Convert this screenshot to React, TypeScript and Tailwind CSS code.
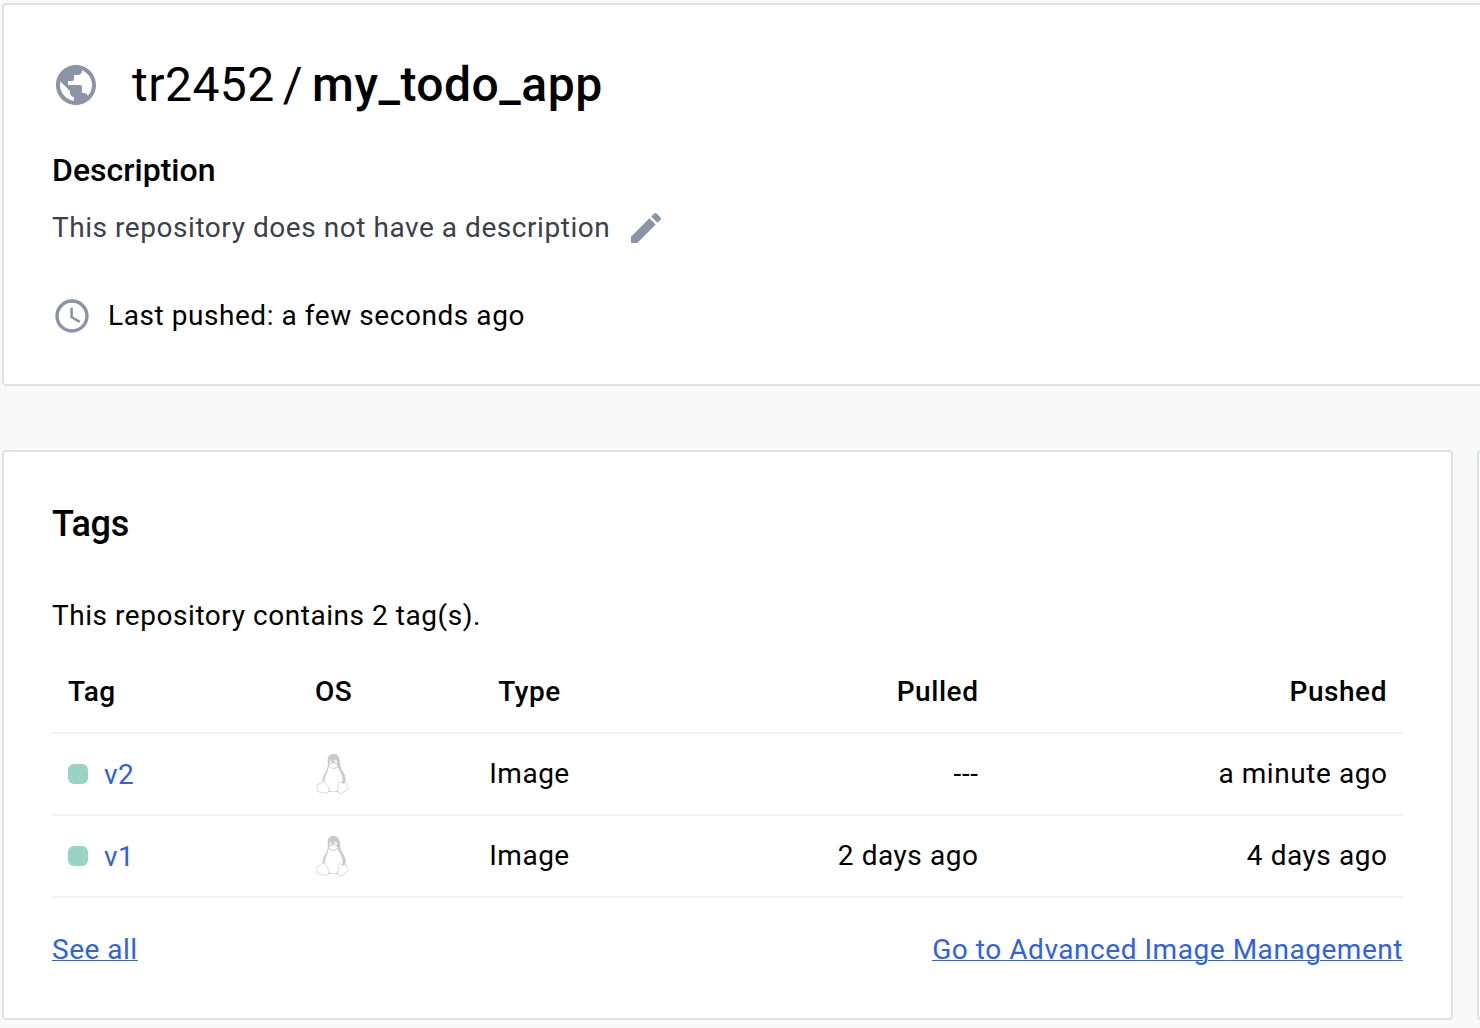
import type { ReactNode } from "react";
import { MdAccessTime, MdEdit, MdPublic } from "react-icons/md";

function Tux() {
  return (
    <svg width="34" height="42" viewBox="0 0 34 42" fill="none">
      <path
        d="M17.800 1c-4.300 0-6.100 2.400-6.100 6 0 4 .5 6.500-.9 9.500-1.500 3-3.500 5.500-4 9-.3 1.500-.4 3-.2 4.500L12 39h12l5-9c.9-2.500.9-5-.1-7.500-1.200-3.200-3.300-5.200-4.300-8.500-.7-2.400-.2-4.800-.8-7.200C22.800 3 21.200 1 17.800 1z"
        fill="#cbcbcb"
      />
      <path
        d="M12.800 13.800c1.200 1.300 3.300 2.200 4.700 2.100 1.500 0 3.300-1.100 4.200-2.100 1 3 3.400 6 4.400 9.500.7 2.500.6 4.300 0 5.700-2.800.5-3.700 3-3.700 5.500 0 1.300-.4 2.500-1.300 3.200-2 .9-5 1-7.200.1-1-2.300-3.500-4.800-5.300-7.700-.3-3 .4-6.200 1.800-9 1.200-2.300 1.800-4.800 2.400-7.300z"
        fill="#fff"
      />
      <ellipse cx="14.600" cy="8.800" rx="1.200" ry="1.500" fill="#fff" />
      <ellipse cx="19.400" cy="8.800" rx="1.700" ry="1.800" fill="#fff" />
      <circle cx="15" cy="8.800" r=".7" fill="#c4c4c4" />
      <circle cx="18.900" cy="8.800" r=".8" fill="#c4c4c4" />
      <path
        d="M13 12c1.200-1.600 2.900-2.200 4.400-1.700 1.600.4 4 .8 4 2 0 1.300-2.500 2.900-4.100 2.900-1.700 0-4.300-1.700-4.300-3.200z"
        fill="#fff"
        stroke="#dedede"
        strokeWidth=".5"
      />
      <path
        d="M6.500 28.500c1.700-.3 2.900.9 4 2.700 1.200 2 3 4 2.500 6.200-.5 2.300-2.600 3.300-4.800 2.700-2.300-.8-5-1.100-6.600-1.700-1.200-.5-.4-2-.3-3.300.1-1.300-.8-2.900-.1-3.700.8-.8 2.400-.3 3.400-1 .8-.6 1-1.700 1.900-1.900z"
        fill="#fff"
        stroke="#cfcfcf"
        strokeWidth=".8"
      />
      <path
        d="M23.500 28.700c-1.700.9-1.200 3.600-1.300 5.700-.1 2-.9 4.200.4 5.500 1.500 1.200 3.700.6 5.100-.8 1.500-1.500 3.700-2.300 4.900-3.300.9-.9-.7-1.800-1.300-2.700-.6-.9-.2-2.800-1.200-3.700-1-.7-1.300.9-3 .9-2.100 0-2.300-2.200-3.600-1.600z"
        fill="#fff"
        stroke="#cfcfcf"
        strokeWidth=".8"
      />
    </svg>
  );
}

const columns =
  "grid grid-cols-[210px_142px_250px_340px_409px] items-center border-b-2 border-[#f1f1f2]";

function TagRow({ tag, pulled, pushed }: { tag: string; pulled: string; pushed: string }) {
  return (
    <div className={`${columns} h-[82px]`}>
      <div className="flex items-center gap-4 pl-4">
        <span className="size-5 rounded-[6px] bg-[#99d3c1]" />
        <a className="pt-0.5 text-[#2e62e4]">{tag}</a>
      </div>
      <div className="flex justify-center pb-px">
        <Tux />
      </div>
      <div className="pl-px text-center tracking-[0.5px]">Image</div>
      <div className="pr-[15.500px] text-right">{pulled}</div>
      <div className="pr-[15.500px] text-right">{pushed}</div>
    </div>
  );
}

function Card({ className, children }: { className: string; children?: ReactNode }) {
  return <section className={`shrink-0 border-2 border-[#e1e2e6] bg-white ${className}`}>{children}</section>;
}

export default function App() {
  return (
    <main className="flex h-[1028px] w-[1480px] flex-col gap-16 overflow-hidden bg-[#f9f9fa] pt-[3px] pl-0.5 font-['Roboto',sans-serif] text-[28px] leading-10 tracking-[0.02em] text-black">
      <Card className="h-[383px] w-[1500px] rounded-[4px] px-12 pt-12">
        <div className="flex h-16 items-center">
          <MdPublic className="size-12 text-[#8b93a6]" />
          <h1 className="ml-8 text-[48px] leading-16 tracking-[0.01em] whitespace-pre">
            tr2452<span className="ml-2 mr-[9px]">/</span>
            <span className="font-medium tracking-[0.5px]">my_todo_app</span>
          </h1>
        </div>
        <h2 className="mt-[33px] text-[32px] font-medium tracking-normal">Description</h2>
        <div className="mt-[18px] flex items-center gap-4 text-[#3c404a]">
          <p className="tracking-[0.55px]">This repository does not have a description</p>
          <MdEdit className="size-10 text-[#8b93a6]" />
        </div>
        <div className="mt-12 flex items-center gap-4">
          <MdAccessTime className="size-10 text-[#8b93a6]" />
          <p>Last pushed: a few seconds ago</p>
        </div>
      </Card>

      <div className="flex gap-6">
        <Card className="h-[570px] w-[1451px] rounded-[4px] px-12 pt-12">
          <h2 className="text-[36px] leading-12 font-medium tracking-[-0.2px]">Tags</h2>
          <p className="mt-12 tracking-[0.55px]">This repository contains 2 tag(s).</p>
          <div className="w-[1351px]">
            <div className={`${columns} h-[98px] pt-[15px] font-medium`}>
              <div className="pl-4 tracking-[0.4px]">Tag</div>
              <div className="pl-px text-center tracking-[0.4px]">OS</div>
              <div className="pl-px text-center tracking-[0.5px]">Type</div>
              <div className="pr-[15.500px] text-right">Pulled</div>
              <div className="pr-4 text-right">Pushed</div>
            </div>
            <TagRow tag="v2" pulled="---" pushed="a minute ago" />
            <TagRow tag="v1" pulled="2 days ago" pushed="4 days ago" />
          </div>
          <div className="mt-8 flex w-[1351px] justify-between text-[#2e62e4] underline decoration-1 underline-offset-[1px]">
            <a className="tracking-[0.5px]">See all</a>
            <a className="tracking-[0.54px]">Go to Advanced Image Management</a>
          </div>
        </Card>
        <Card className="h-[570px] w-[500px] rounded-[4px]" />
      </div>
    </main>
  );
}
